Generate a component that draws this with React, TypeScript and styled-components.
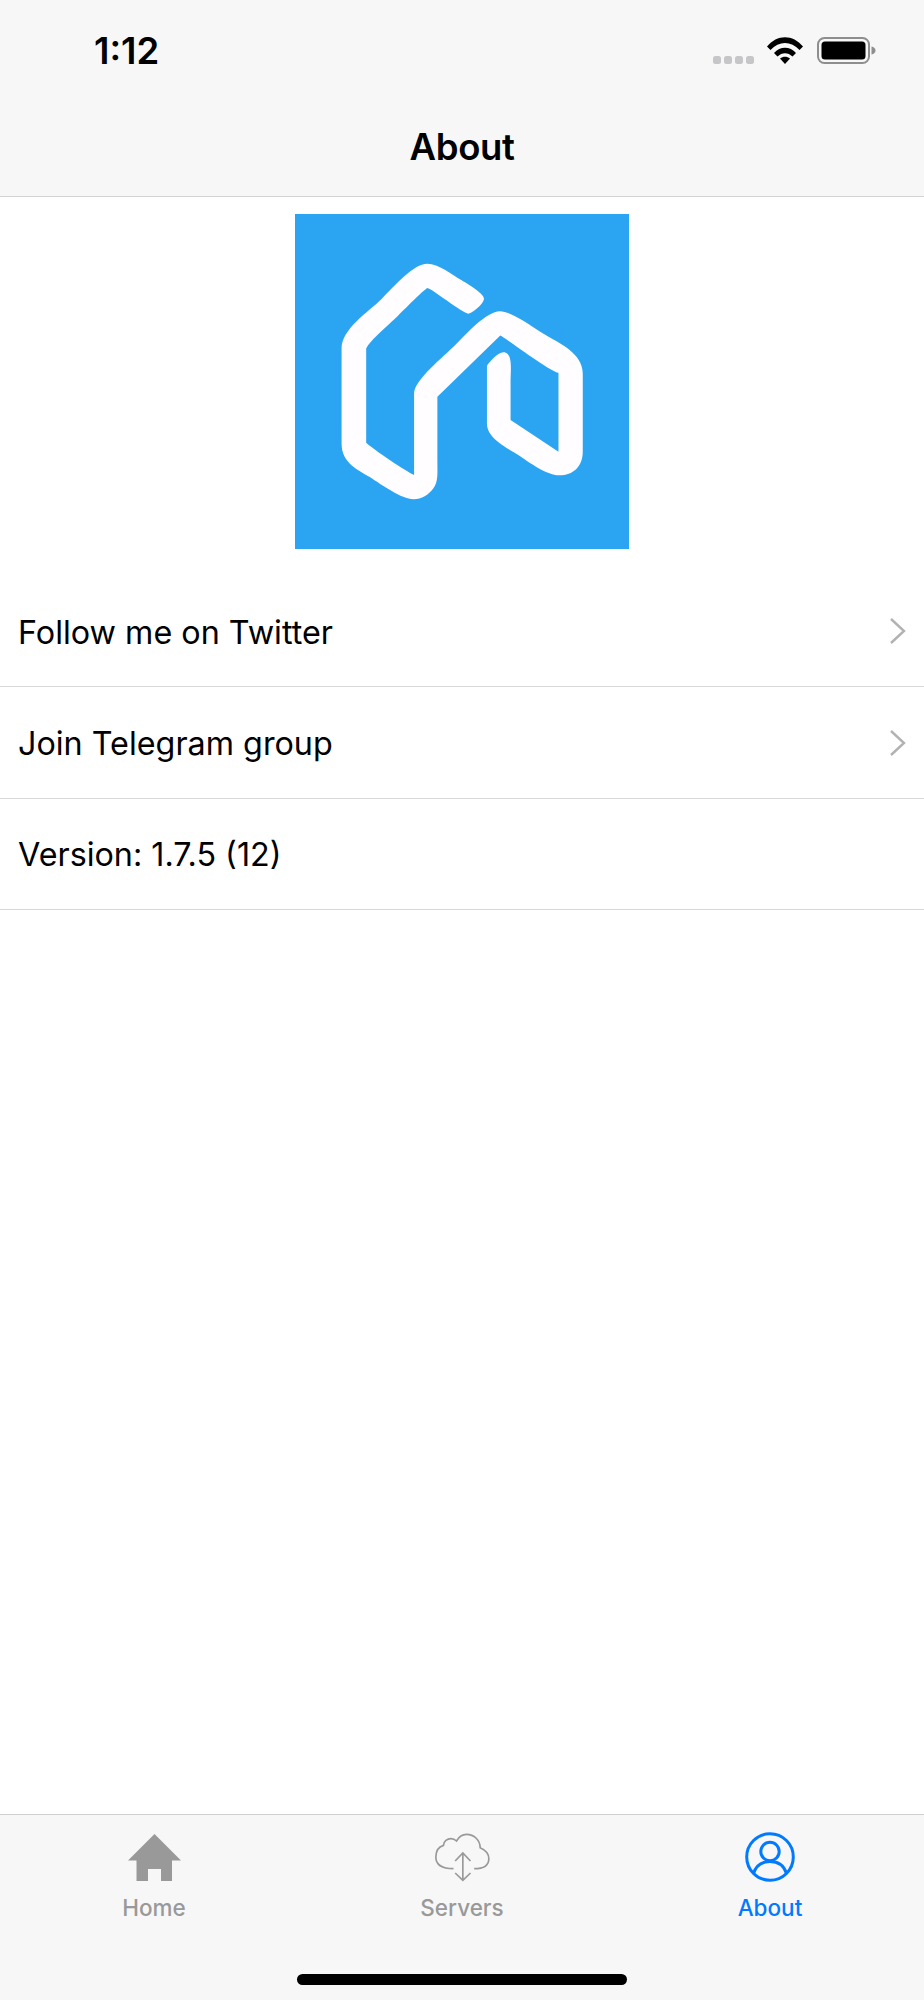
import React from "react"
import styled, { createGlobalStyle } from "styled-components"

const GlobalStyle = createGlobalStyle`
  html, body {
    margin: 0;
    padding: 0;
    background: #fff;
  }
  * {
    box-sizing: border-box;
  }
`

const Screen = styled.div`
  width: 924px;
  height: 2000px;
  display: flex;
  flex-direction: column;
  background: #fff;
  color: #000;
  font-family: Inter, "Liberation Sans", sans-serif;
  overflow: hidden;
`

const TopBar = styled.header`
  height: 197px;
  flex: none;
  display: flex;
  flex-direction: column;
  background: #f7f7f8;
  border-bottom: 1.5px solid #d3d3d5;
`

const StatusBar = styled.div`
  height: 123px;
  display: flex;
  align-items: flex-start;
  justify-content: space-between;
  padding: 29px 47px 0 94px;
`

const Time = styled.span`
  font-size: 36.5px;
  line-height: 44px;
  font-weight: 600;
`

const StatusIcons = styled.div`
  display: flex;
  align-items: flex-start;
  gap: 14px;
  padding-top: 8px;
`

const Signal = styled.div`
  display: flex;
  gap: 3px;
  margin: 19px -1px 0 0;
`

const SignalDot = styled.span`
  width: 8px;
  height: 8px;
  border-radius: 2.5px;
  background: #c6c6c8;
`

const NavTitle = styled.h1`
  margin: 0;
  text-align: center;
  font-size: 36.5px;
  line-height: 48px;
  font-weight: 600;
  letter-spacing: -0.4px;
`

const Content = styled.main`
  flex: 1;
  display: flex;
  flex-direction: column;
`

const LogoWrap = styled.div`
  display: flex;
  justify-content: center;
  padding: 17px 0 27px;
`

const LogoBox = styled.svg`
  display: block;
  width: 334px;
  height: 335px;
  background: #2ba4f1;
`

const Row = styled.div`
  height: 111.4px;
  display: flex;
  align-items: center;
  justify-content: space-between;
  padding: 0 17px 0 18px;
  border-bottom: 1.5px solid #d8d8da;
`

const RowLabel = styled.span`
  padding-top: 3px;
  font-size: 32.3px;
  line-height: 40px;
  font-weight: 400;
`

const TabBar = styled.nav`
  height: 186px;
  flex: none;
  display: flex;
  flex-direction: column;
  background: #f7f7f8;
  border-top: 1.5px solid #cfcfd1;
`

const Tabs = styled.div`
  display: grid;
  grid-template-columns: repeat(3, 1fr);
  padding-top: 17px;
`

const Tab = styled.div<{ $active?: boolean }>`
  display: flex;
  flex-direction: column;
  align-items: center;
  color: ${(p) => (p.$active ? "#007aff" : "#999999")};
`

const TabIcon = styled.div`
  height: 50px;
  display: flex;
  align-items: center;
  justify-content: center;
`

const TabLabel = styled.span`
  margin-top: 12px;
  font-size: 22.5px;
  line-height: 28px;
  font-weight: 500;
`

const HomeIndicator = styled.div`
  width: 330px;
  height: 11px;
  margin: 52px auto 0;
  border-radius: 6px;
  background: #000;
`

const Chevron = () => (
  <svg width="18" height="28" viewBox="0 0 18 28" fill="none">
    <path d="M2 2 L15 14 L2 26" stroke="#b2b2b2" strokeWidth="2.4" />
  </svg>
)

const Wifi = () => (
  <svg width="36" height="27" viewBox="0 0 36 27" fill="#000">
    <path d="M0 9.5 C10 -3 26 -3 36 9.5 L32.5 13 C24 3.5 12 3.5 3.5 13 Z" />
    <path d="M7 16 C13 9 23 9 29 16 L25.5 19.5 C21 15 15 15 10.5 19.5 Z" />
    <path d="M13 21.5 C16 19 20 19 23 21.5 L18 27 Z" />
  </svg>
)

const Battery = () => (
  <svg width="60" height="27" viewBox="0 0 60 27">
    <rect x="1" y="1" width="51" height="25" rx="6.5" fill="none" stroke="#8e8e8e" strokeWidth="2" />
    <rect x="4.5" y="4.5" width="44" height="18" rx="3.5" fill="#000" />
    <path d="M54.5 9.5 C57 10 58.5 11.5 58.5 13.5 C58.5 15.5 57 17 54.5 17.5 Z" fill="#8e8e8e" />
  </svg>
)

const Logo = () => (
  <LogoBox viewBox="44 42 1004 1004">
    <path
      fill="#fffdff"
      d="M184 445 C184 385 265 335 305 295 C345 255 400 190 442 190 C475 190 515 222 545 240 C575 258 612 282 612 295 C612 310 575 340 565 340 C550 340 455 265 442 263 C430 270 385 315 355 345 C325 375 270 420 258 445 L258 728 C285 752 375 812 402 825 L402 580 C402 540 490 470 525 435 C560 400 620 333 660 333 C695 333 760 382 795 403 C840 430 909 460 909 520 L909 755 C909 800 880 826 838 826 C800 826 745 785 715 765 C680 742 621 715 621 670 L621 497 C630 482 655 456 670 456 C700 456 692 510 692 545 L692 660 L836 755 L836 518 C810 515 680 415 661 406 L472 590 L472 780 C472 820 475 845 460 865 C445 885 425 898 400 898 C365 898 305 855 270 832 C235 810 184 790 184 730 Z"
    />
  </LogoBox>
)

const HomeGlyph = () => (
  <svg width="53" height="47" viewBox="0 0 53 47" fill="currentColor">
    <path d="M26.5 0 L53 26.5 L44 26.5 L44 47 L33 47 L33 35 L20 35 L20 47 L8.5 47 L8.5 26.5 L0 26.5 Z" />
  </svg>
)

const CloudGlyph = () => (
  <svg width="57" height="50" viewBox="100 65 170 150" fill="none" stroke="currentColor" strokeWidth="5">
    <path d="M158 175 C125 175 105 165 105 140 C105 118 118 108 128 105 C128 92 140 85 150 85 C158 85 163 88 167 92 C175 78 185 72 197 72 C220 72 238 90 238 112 C252 118 264 130 264 145 C264 165 248 175 220 175" />
    <path d="M186 130 L186 210 M163 152 L186 128 L209 152 M163 188 L186 210 L209 188" />
  </svg>
)

const PersonGlyph = () => (
  <svg width="50" height="50" viewBox="0 0 50 50" fill="none" stroke="currentColor" strokeWidth="3">
    <circle cx="25" cy="25" r="23.3" />
    <circle cx="25" cy="19.5" r="9.2" />
    <path d="M8.5 41.5 C11 33.5 17 29.5 25 29.5 C33 29.5 39 33.5 41.5 41.5" />
  </svg>
)

const rows = [
  { label: "Follow me on Twitter", link: true },
  { label: "Join Telegram group", link: true },
  { label: "Version: 1.7.5 (12)", link: false },
]

const App: React.FC = () => {
  return (
    <Screen>
      <GlobalStyle />
      <TopBar>
        <StatusBar>
          <Time>1:12</Time>
          <StatusIcons>
            <Signal>
              <SignalDot />
              <SignalDot />
              <SignalDot />
              <SignalDot />
            </Signal>
            <Wifi />
            <Battery />
          </StatusIcons>
        </StatusBar>
        <NavTitle>About</NavTitle>
      </TopBar>
      <Content>
        <LogoWrap>
          <Logo />
        </LogoWrap>
        {rows.map((row) => (
          <Row key={row.label}>
            <RowLabel>{row.label}</RowLabel>
            {row.link && <Chevron />}
          </Row>
        ))}
      </Content>
      <TabBar>
        <Tabs>
          <Tab>
            <TabIcon>
              <HomeGlyph />
            </TabIcon>
            <TabLabel>Home</TabLabel>
          </Tab>
          <Tab>
            <TabIcon>
              <CloudGlyph />
            </TabIcon>
            <TabLabel>Servers</TabLabel>
          </Tab>
          <Tab $active>
            <TabIcon>
              <PersonGlyph />
            </TabIcon>
            <TabLabel>About</TabLabel>
          </Tab>
        </Tabs>
        <HomeIndicator />
      </TabBar>
    </Screen>
  )
}

export default App
